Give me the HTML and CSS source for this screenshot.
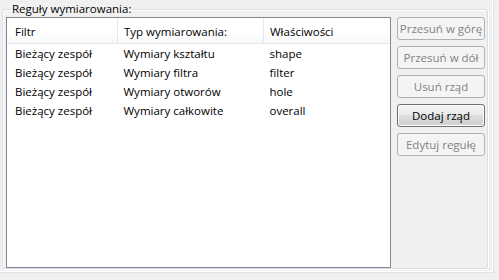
FILE: index.html
```html
<!DOCTYPE html>
<html lang="pl">
<head>
    <meta charset="UTF-8">
    <title>Reguły wymiarowania</title>
    <link rel="stylesheet" href="styles.css">
</head>
<body>
    <div class="panel">
        <fieldset class="group">
            <legend>Reguły wymiarowania:</legend>
            <div class="group-body">
                <div class="list">
                    <table class="rules">
                        <thead>
                            <tr>
                                <th class="col-filter">Filtr</th>
                                <th class="col-type">Typ wymiarowania:</th>
                                <th class="col-prop">Właściwości</th>
                            </tr>
                        </thead>
                        <tbody>
                            <tr><td>Bieżący zespół</td><td>Wymiary kształtu</td><td>shape</td></tr>
                            <tr><td>Bieżący zespół</td><td>Wymiary filtra</td><td>filter</td></tr>
                            <tr><td>Bieżący zespół</td><td>Wymiary otworów</td><td>hole</td></tr>
                            <tr><td>Bieżący zespół</td><td>Wymiary całkowite</td><td>overall</td></tr>
                        </tbody>
                    </table>
                </div>
                <div class="actions">
                    <button class="btn" disabled>Przesuń w górę</button>
                    <button class="btn" disabled>Przesuń w dół</button>
                    <button class="btn" disabled>Usuń rząd</button>
                    <button class="btn">Dodaj rząd</button>
                    <button class="btn" disabled>Edytuj regułę</button>
                </div>
            </div>
        </fieldset>
    </div>
</body>
</html>
```

FILE: styles.css
```css
body {
    margin: 0;
    background-color: #f0f0f0;
    font-family: 'Open Sans', 'Noto Sans', sans-serif;
    font-size: 11.5px;
    color: #000;
}

.panel {
    width: 494px;
    height: 273px;
    box-sizing: border-box;
    padding: 1px 0 0 2px;
    border-right: 1px solid #dde5ea;
    border-bottom: 1px solid #dde5ea;
    box-shadow: inset -1px -1px 0 #fff;
}

.group {
    box-sizing: border-box;
    width: 486px;
    height: 268px;
    margin: 0;
    padding: 0 2px 0 3px;
    border: 1px solid #d5dfe5;
    border-radius: 3px;
    box-shadow: inset 1px 1px 0 #fff, 1px 1px 0 #fff;
}

.group legend {
    margin-left: 4px;
    padding: 0 2px;
    line-height: 16px;
    color: #000;
}

.group-body {
    display: flex;
    gap: 6px;
}

.list {
    width: 385px;
    height: 251px;
    box-sizing: border-box;
    border: 1px solid #828790;
    background-color: #fff;
}

.rules {
    border-collapse: collapse;
    table-layout: fixed;
    width: 100%;
}

.rules th {
    height: 24px;
    padding: 1px 0 0 6px;
    text-align: left;
    font-weight: normal;
    background: linear-gradient(#ffffff, #ffffff 60%, #f6f7f9);
    border-right: 1px solid #e5e8ec;
    border-bottom: 1px solid #e5e8ec;
}

.rules th.col-filter {
    width: 102px;
    padding-left: 8px;
}

.rules th.col-type {
    width: 139px;
}

.rules th.col-prop {
    border-right: none;
}

.rules td {
    height: 19px;
    padding: 0 0 0 6px;
    white-space: nowrap;
}

.rules td:first-child {
    padding-left: 8px;
}

.actions {
    display: flex;
    flex-direction: column;
    gap: 6px;
    width: 88px;
}

.btn {
    height: 23px;
    padding: 0;
    font-family: inherit;
    font-size: inherit;
    color: #000;
    border: 1px solid #707070;
    border-radius: 3px;
    background: linear-gradient(#f2f2f2, #ebebeb 50%, #dddddd 50%, #cfcfcf);
    box-shadow: inset 0 0 0 1px #fcfcfc;
}

.btn:disabled {
    color: #838383;
    border-color: #adb2b5;
    background: #f4f4f4;
    box-shadow: none;
}
```
